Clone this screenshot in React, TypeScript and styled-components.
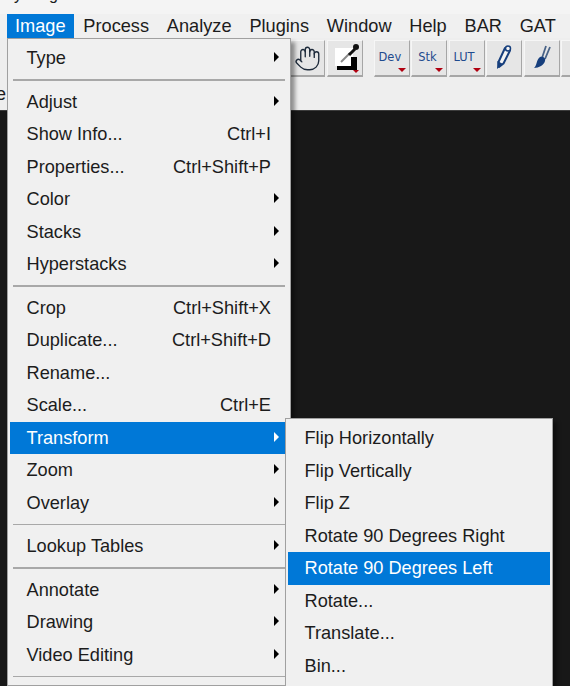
import { createGlobalStyle, styled } from 'styled-components';
import { Hand } from 'lucide-react';

const GlobalStyle = createGlobalStyle`
  html, body {
    margin: 0;
    padding: 0;
    background: #181818;
  }
  * {
    box-sizing: border-box;
  }
`;

type Entry =
  | { sep: true }
  | { label: string; shortcut?: string; arrow?: boolean; active?: boolean; sep?: false };

const menuBarItems = ['Image', 'Process', 'Analyze', 'Plugins', 'Window', 'Help', 'BAR', 'GAT'];

const imageMenu: Entry[] = [
  { label: 'Type', arrow: true },
  { sep: true },
  { label: 'Adjust', arrow: true },
  { label: 'Show Info...', shortcut: 'Ctrl+I' },
  { label: 'Properties...', shortcut: 'Ctrl+Shift+P' },
  { label: 'Color', arrow: true },
  { label: 'Stacks', arrow: true },
  { label: 'Hyperstacks', arrow: true },
  { sep: true },
  { label: 'Crop', shortcut: 'Ctrl+Shift+X' },
  { label: 'Duplicate...', shortcut: 'Ctrl+Shift+D' },
  { label: 'Rename...' },
  { label: 'Scale...', shortcut: 'Ctrl+E' },
  { label: 'Transform', arrow: true, active: true },
  { label: 'Zoom', arrow: true },
  { label: 'Overlay', arrow: true },
  { sep: true },
  { label: 'Lookup Tables', arrow: true },
  { sep: true },
  { label: 'Annotate', arrow: true },
  { label: 'Drawing', arrow: true },
  { label: 'Video Editing', arrow: true },
  { sep: true },
];

const transformMenu: Entry[] = [
  { label: 'Flip Horizontally' },
  { label: 'Flip Vertically' },
  { label: 'Flip Z' },
  { label: 'Rotate 90 Degrees Right' },
  { label: 'Rotate 90 Degrees Left', active: true },
  { label: 'Rotate...' },
  { label: 'Translate...' },
  { label: 'Bin...' },
  { sep: true },
];

const MenuRows = ({ entries }: { entries: Entry[] }) => (
  <>
    {entries.map((entry, i) =>
      entry.sep ? (
        <Separator key={i} />
      ) : (
        <Row key={entry.label} $active={entry.active}>
          <span>{entry.label}</span>
          {entry.shortcut && <span>{entry.shortcut}</span>}
          {entry.arrow && <Arrow $active={entry.active} />}
        </Row>
      ),
    )}
  </>
);

const App = () => {
  return (
    <Page>
      <GlobalStyle />
      <TitleStrip>
        <TitleText>y</TitleText>
        <TitleText>g</TitleText>
      </TitleStrip>
      <MenuBar>
        {menuBarItems.map((item, i) => (
          <MenuBarItem key={item} $active={i === 0}>
            {item}
          </MenuBarItem>
        ))}
      </MenuBar>
      <Toolbar>
        <ToolButton>
          <Hand size={27} color="#1d2a3a" strokeWidth={1.2} />
        </ToolButton>
        <ToolButton>
          <svg width="32" height="32" viewBox="0 0 32 32">
            <rect x="6" y="6" width="18" height="18" fill="#fff" />
            <path d="M8 24h14V15h6v13H8z" fill="#000" />
            <path d="M12 20l9-9" stroke="#8a8a8a" strokeWidth="2" />
            <path d="M20 13l6-6" stroke="#111" strokeWidth="3" />
            <circle cx="27" cy="5" r="3" fill="#111" />
            <path d="M24 28h6l-3 3z" fill="#b00010" />
          </svg>
        </ToolButton>
        <ToolSpacer />
        {['Dev', 'Stk', 'LUT'].map((label) => (
          <ToolButton key={label}>
            <ToolLabel>{label}</ToolLabel>
            <DropMark />
          </ToolButton>
        ))}
        <ToolButton>
          <svg width="20" height="28" viewBox="0 0 20 28">
            <path d="M11 4l5 2.500-6.500 13-4.500 3.500-.5-5z" fill="#f4f4f4" stroke="#173f7d" strokeWidth="2" strokeLinejoin="round" />
            <path d="M3.500 17l5.500 3-6 5z" fill="#173f7d" />
            <circle cx="14" cy="4.500" r="2.500" fill="#f4f4f4" stroke="#173f7d" strokeWidth="1.500" />
          </svg>
        </ToolButton>
        <ToolButton>
          <svg width="24" height="28" viewBox="0 0 24 28">
            <path d="M12 14L16 2M15 15L20 3" stroke="#4a6488" strokeWidth="1.800" />
            <path d="M10 13c3-1 6 1 5 4-1 4-6 7-11 7 3-2 2-8 6-11z" fill="#173f7d" />
          </svg>
        </ToolButton>
        <ToolButton />
      </Toolbar>
      <StatusLine>e</StatusLine>
      <Canvas />
      <ImageMenu>
        <MenuRows entries={imageMenu} />
      </ImageMenu>
      <TransformMenu>
        <MenuRows entries={transformMenu} />
      </TransformMenu>
    </Page>
  );
};

export default App;

const Page = styled.div`
  position: relative;
  width: 570px;
  height: 686px;
  overflow: hidden;
  display: flex;
  flex-direction: column;
  background: #eeeeee;
  font-family: 'Liberation Sans', Arial, sans-serif;
  font-size: 18.200px;
  color: #1c1c1c;
`;

const TitleStrip = styled.div`
  height: 14px;
  flex: none;
  overflow: hidden;
  display: flex;
  gap: 27px;
  padding-left: 14px;
  background: #f4f4f4;
`;

const TitleText = styled.span`
  font-size: 16px;
  line-height: 16px;
  margin-top: -13px;
`;

const MenuBar = styled.div`
  height: 24px;
  flex: none;
  display: flex;
  padding-left: 7px;
  gap: 1.800px;
  background: #f0f0f0;
`;

const MenuBarItem = styled.div<{ $active?: boolean }>`
  padding: 0 8px;
  line-height: 24px;
  color: ${(p) => (p.$active ? '#ffffff' : '#1c1c1c')};
  background: ${(p) => (p.$active ? '#0078d7' : 'transparent')};
`;

const Toolbar = styled.div`
  height: 40px;
  flex: none;
  display: flex;
  align-items: flex-start;
  gap: 1.500px;
  padding: 2px 0 0 289px;
`;

const ToolButton = styled.div`
  position: relative;
  width: 36px;
  height: 37px;
  flex: none;
  display: flex;
  align-items: center;
  justify-content: center;
  background: #e6e6e6;
  border-top: 1px solid #f6f6f6;
  border-left: 1px solid #f6f6f6;
  border-right: 1px solid #a6a6a6;
  border-bottom: 2px solid #a6a6a6;
`;

const ToolSpacer = styled.div`
  width: 8px;
  flex: none;
`;

const ToolLabel = styled.span`
  font-family: 'DejaVu Sans', sans-serif;
  font-size: 13px;
  margin: -3px 0 0 -4px;
  transform: scaleX(0.88);
  color: #1f4b8e;
`;

const DropMark = styled.span`
  position: absolute;
  right: 3px;
  bottom: 3px;
  border-style: solid;
  border-width: 4px 4px 0 4px;
  border-color: #b00010 transparent transparent transparent;
`;

const StatusLine = styled.div`
  height: 32px;
  flex: none;
  font-size: 18px;
  line-height: 24px;
  padding-top: 4px;
  margin-left: -4px;
`;

const Canvas = styled.div`
  flex: 1;
  background: #181818;
  border-top: 1px solid #3c3c3c;
`;

const MenuPanel = styled.div`
  position: absolute;
  display: flex;
  flex-direction: column;
  background: #f0f0f0;
  border: 1px solid #a0a0a0;
  padding: 3px 2px;
  box-shadow: 4px 4px 4px rgba(0, 0, 0, 0.4);
`;

const ImageMenu = styled(MenuPanel)`
  left: 7px;
  top: 38px;
  width: 284px;
`;

const TransformMenu = styled(MenuPanel)`
  left: 285px;
  top: 418px;
  width: 268px;
`;

const Row = styled.div<{ $active?: boolean }>`
  position: relative;
  height: 32.500px;
  flex: none;
  display: flex;
  align-items: center;
  justify-content: space-between;
  padding: 0 17px 0 16.500px;
  line-height: 1;
  color: ${(p) => (p.$active ? '#ffffff' : '#1c1c1c')};
  background: ${(p) => (p.$active ? '#0078d7' : 'transparent')};
`;

const Arrow = styled.span<{ $active?: boolean }>`
  position: absolute;
  right: 9px;
  top: 10px;
  border-style: solid;
  border-width: 5px 0 5px 5.500px;
  border-color: transparent transparent transparent ${(p) => (p.$active ? '#ffffff' : '#000000')};
`;

const Separator = styled.div`
  height: 11px;
  flex: none;
  margin: 0 3px;
  display: flex;
  align-items: center;

  &::after {
    content: '';
    flex: 1;
    height: 1.500px;
    background: #a8a8a8;
  }
`;
